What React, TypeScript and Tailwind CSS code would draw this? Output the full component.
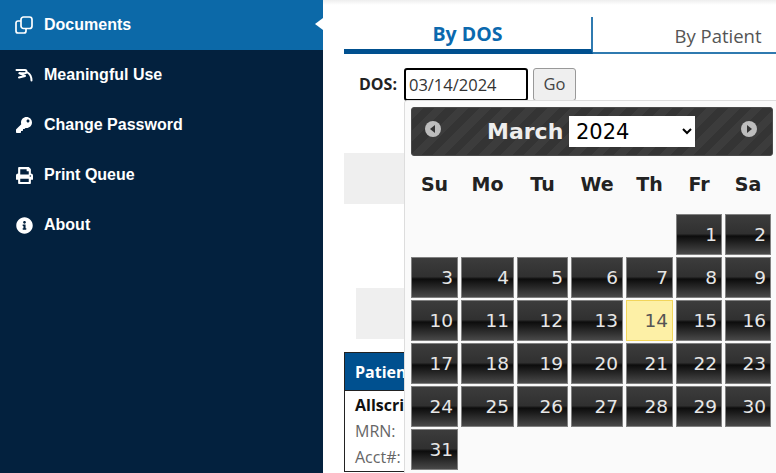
import React from 'react';
import { FaKey, FaPrint, FaInfoCircle } from 'react-icons/fa';

const DocumentsIcon = () => (
  <svg width="18" height="18" viewBox="0 0 18 18" fill="none" stroke="currentColor" strokeWidth="1.7">
    <path d="M6 5H3a2 2 0 0 0-2 2v8a2 2 0 0 0 2 2h6a2 2 0 0 0 2-2v-2.500" strokeLinejoin="round" />
    <rect x="6" y="1" width="11" height="11.500" rx="2.500" />
  </svg>
);

const MeaningfulIcon = () => (
  <svg width="18" height="14" viewBox="0 0 18 14" fill="none" stroke="currentColor" strokeWidth="2" strokeLinecap="round" strokeLinejoin="round">
    <path d="M1.500 2h8.500c2 0 2 3.200 0 3.200H4.500" />
    <path d="M4.500 5.200L10 8 4 9.500" />
    <path d="M12.500 4.500c2.500 1.500 4 4.500 4 8" />
  </svg>
);

const PrevNext = ({ dir }: { dir: 'left' | 'right' }) => (
  <svg width="16" height="16" viewBox="0 0 16 16">
    <circle cx="8" cy="8" r="8" fill="#bdbdbd" />
    <path d={dir === 'left' ? 'M10 4v8L5 8z' : 'M6 4v8l5-4z'} fill="#333" />
  </svg>
);

const navItems = [
  { label: 'Meaningful Use', icon: <MeaningfulIcon /> },
  { label: 'Change Password', icon: <FaKey size={16} /> },
  { label: 'Print Queue', icon: <FaPrint size={17} /> },
  { label: 'About', icon: <FaInfoCircle size={17} /> },
];

const weekDays = ['Su', 'Mo', 'Tu', 'We', 'Th', 'Fr', 'Sa'];

const Sidebar = () => (
  <aside className="w-[323px] h-full shrink-0 bg-[#03213e] text-white font-['Liberation_Sans',sans-serif] font-bold text-[16px]">
    <div className="relative flex items-center h-[50px] bg-[#0c69a8] pl-[15px] gap-[11px]">
      <DocumentsIcon />
      <span>Documents</span>
      <span className="absolute right-0 top-[18px] w-0 h-0 border-y-[6px] border-y-transparent border-r-[8px] border-r-white" />
    </div>
    {navItems.map((item) => (
      <div key={item.label} className="flex items-center h-[50px] pl-[15px] gap-[11px]">
        <span className="w-[18px] flex justify-center">{item.icon}</span>
        <span>{item.label}</span>
      </div>
    ))}
  </aside>
);

const DayCell = ({ day }: { day: number }) => {
  if (day === 14) {
    return (
      <div className="h-[41px] flex items-center justify-end pr-[4px] bg-[#fdf0a6] border border-[#f2d55a] text-[#555]">
        {day}
      </div>
    );
  }
  return (
    <div className="h-[41px] flex items-center justify-end pr-[4px] border border-[#808080] text-[#e6e6e6] bg-[linear-gradient(#3c3c3c_0%,#303030_48%,#0c0c0c_54%,#484848_100%)]">
      {day}
    </div>
  );
};

const DatePicker = () => {
  const days = Array.from({ length: 31 }, (_, i) => i + 1);
  return (
    <div className="absolute left-[81px] top-[100px] w-[380px] h-[380px] bg-[#fafafa] border border-[#ddd] rounded-[3px] pl-[6px] pt-[6px] font-['DejaVu_Sans',sans-serif]">
      <div className="w-[362px] h-[49px] flex items-center relative rounded-[3px] border border-[#4a4a4a] bg-[#3a3a3a] bg-[repeating-linear-gradient(135deg,#3c3c3c_0px,#3c3c3c_8px,#343434_8px,#343434_16px)]">
        <span className="absolute left-[13px] top-[13px]"><PrevNext dir="left" /></span>
        <div className="flex items-center ml-[75px] gap-[8px]">
          <span className="font-bold text-[22px] text-[#eee] w-[74px]">March</span>
          <select
            defaultValue="2024"
            className="w-[126px] h-[31px] bg-white text-black text-[21px] pl-[3px] font-['DejaVu_Sans',sans-serif]"
          >
            <option value="2024">2024</option>
          </select>
        </div>
        <span className="absolute left-[329px] top-[13px]"><PrevNext dir="right" /></span>
      </div>
      <div className="grid grid-cols-[47px_53px_51px_52px_47px_46px_46px] gap-x-[3px] gap-y-[2px] text-[18.5px] mt-[1px]">
        {weekDays.map((d) => (
          <div key={d} className="h-[55px] flex items-center justify-center font-bold text-[#222] text-[19px]">
            {d}
          </div>
        ))}
        {Array.from({ length: 5 }).map((_, i) => (
          <div key={`blank-${i}`} />
        ))}
        {days.map((day) => (
          <DayCell key={day} day={day} />
        ))}
      </div>
    </div>
  );
};

export default function App() {
  return (
    <div className="w-[776px] h-[473px] flex overflow-hidden bg-white font-['Open_Sans',sans-serif]">
      <Sidebar />
      <main className="relative flex-1 overflow-hidden">
        <div className="h-[5px] bg-gradient-to-b from-[#eeeeee] to-white" />
        <div className="pl-[21px]">
          {/* Tabs */}
          <div className="flex h-[37px] mt-[12px] w-[600px] border-b-2 border-b-[#2f7ab0] relative">
            <div className="w-[249px] h-[37px] border-r-2 border-r-[#2f7ab0] border-b-[5px] border-b-[#00508f] text-center font-bold text-[19.5px] text-[#0b69ae] leading-[34px]">
              By DOS
            </div>
            <div className="w-[250px] text-center text-[18.5px] text-[#555] leading-[38px]">By Patient</div>
          </div>
          {/* DOS form */}
          <div className="flex items-center mt-[13px] ml-[15px] h-[34px] text-[#222]">
            <span className="font-bold text-[16px] mr-[7px]">DOS:</span>
            <div className="w-[124px] h-[33px] border-2 border-black rounded-[3px] pl-[3px] text-[16.5px] text-[#333] leading-[29px]">
              03/14/2024
            </div>
            <button className="ml-[5px] w-[43px] h-[33px] border border-[#999] rounded-[3px] bg-[#efefef] text-[16.5px] text-[#444]">
              Go
            </button>
          </div>
          <div className="mt-[52px] h-[51px] w-[60px] bg-[#efefef]" />
          <div className="mt-[84px] ml-[12px] h-[51px] w-[48px] bg-[#efefef]" />
          {/* Patient card */}
          <div className="mt-[13px] w-[200px] border border-[#222] text-[16px]">
            <div className="h-[38px] bg-[#00508f] text-white font-bold pl-[10px] leading-[38px] border-b border-[#222]">Patient</div>
            <div className="pl-[10px] pt-[2px]">
              <div className="font-bold text-[#111] leading-[25px]">Allscripts</div>
              <div className="text-[#666] leading-[26px]">MRN:</div>
              <div className="text-[#666] leading-[27px]">Acct#:</div>
            </div>
          </div>
        </div>
        <DatePicker />
      </main>
    </div>
  );
}
